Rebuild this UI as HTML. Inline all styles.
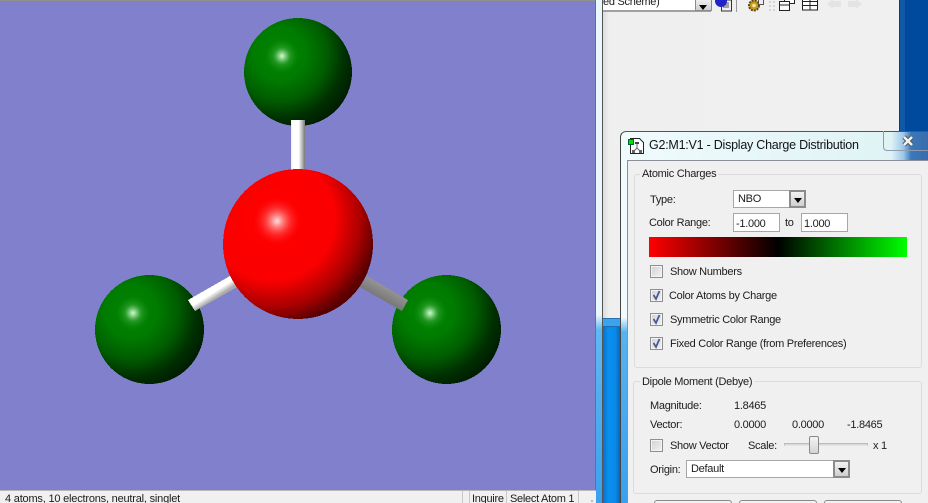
<!DOCTYPE html>
<html><head><meta charset="utf-8"><style>
html,body{margin:0;padding:0;width:928px;height:503px;overflow:hidden}
body{position:relative;background:#f0f0f0;font-family:"Liberation Sans",sans-serif}
#w{left:0;top:0;width:928px;height:503px;overflow:hidden}
div,span.t{position:absolute;box-sizing:border-box}
.t{white-space:nowrap;font-size:11px;letter-spacing:-.28px;line-height:16px;color:#1c1c1c}
.inp{background:#fff;border:1px solid #a6a6a6}
.group{border:1px solid #dcdcdc;border-radius:3px;background:#f0f0f0}
.lg{background:#f0f0f0;padding:0 2px;line-height:14px;margin-top:1px}
.cb{width:13px;height:13px;border:1px solid #8e8f8f;background:linear-gradient(135deg,#d2d2d2,#f2f2f2);box-shadow:inset 0 0 0 1px #f4f4f4}
.cb svg{position:absolute;left:0;top:0}
.dd{background:linear-gradient(#f2f2f2,#cfcfcf);border:2px solid #8c8c8c;width:17px}
.dd:after{content:"";position:absolute;left:3px;top:6px;border:4px solid transparent;border-top:5px solid #000;border-bottom:0}
.btn{border:1px solid #8a8a8a;border-radius:3px;background:#f2f2f2;width:78px;height:12px;top:500px}
</style></head><body><div id="w">

<svg width="596" height="503" style="position:absolute;left:0;top:0" xmlns="http://www.w3.org/2000/svg">
<defs>
<radialGradient id="g" cx=".33" cy=".33" r=".8">
<stop offset="0" stop-color="#008400"/><stop offset=".3" stop-color="#007c00"/><stop offset=".55" stop-color="#005c00"/><stop offset=".75" stop-color="#003000"/><stop offset=".92" stop-color="#001c00"/>
</radialGradient>
<radialGradient id="r" cx=".33" cy=".33" r=".8">
<stop offset="0" stop-color="#ff0000"/><stop offset=".52" stop-color="#fa0000"/><stop offset=".74" stop-color="#a80000"/><stop offset=".88" stop-color="#5c0000"/><stop offset="1" stop-color="#500000"/>
</radialGradient>
<radialGradient id="hg"><stop offset="0" stop-color="#d0f8d0"/><stop offset=".2" stop-color="#80d080"/><stop offset=".5" stop-color="#30a030" stop-opacity=".7"/><stop offset="1" stop-color="#109010" stop-opacity="0"/></radialGradient>
<radialGradient id="hr"><stop offset="0" stop-color="#ffe0e0"/><stop offset=".2" stop-color="#ff9090"/><stop offset=".55" stop-color="#ff4040" stop-opacity=".7"/><stop offset="1" stop-color="#ff1010" stop-opacity="0"/></radialGradient>
<linearGradient id="b0" x1="0" x2="1" y1="0" y2="0"><stop offset="0" stop-color="#ececec"/><stop offset=".12" stop-color="#fff"/><stop offset=".55" stop-color="#fff"/><stop offset="1" stop-color="#777"/></linearGradient>
<linearGradient id="b1" x1="188" y1="300" x2="195" y2="311" gradientUnits="userSpaceOnUse"><stop offset="0" stop-color="#fff"/><stop offset=".55" stop-color="#fff"/><stop offset="1" stop-color="#aaa"/></linearGradient>
<linearGradient id="b2" x1="408" y1="300" x2="402" y2="311" gradientUnits="userSpaceOnUse"><stop offset="0" stop-color="#929292"/><stop offset="1" stop-color="#777"/></linearGradient>
</defs>
<rect width="596" height="503" fill="#8080cc"/>
<rect width="596" height="1" fill="#909090"/>
<rect x="595" width="1" height="490" fill="#707070"/>
<g shape-rendering="crispEdges">
<circle cx="298" cy="72" r="54" fill="url(#g)"/>
<circle cx="149.500" cy="329.500" r="54.500" fill="url(#g)"/>
<circle cx="446.500" cy="329.500" r="54.500" fill="url(#g)"/>
</g>
<circle cx="282" cy="56" r="17" fill="url(#hg)"/>
<circle cx="133" cy="313" r="17" fill="url(#hg)"/>
<circle cx="430" cy="313" r="17" fill="url(#hg)"/>
<g shape-rendering="crispEdges">
<rect x="291" y="120" width="14" height="52" fill="url(#b0)"/>
<polygon points="188,300 195,311 237,287 230,276" fill="url(#b1)"/>
<polygon points="367,276 360,287 402,311 408,300" fill="url(#b2)"/>
<circle cx="298" cy="244" r="75" fill="url(#r)"/>
</g>
<circle cx="277" cy="221" r="24" fill="url(#hr)"/>
</svg>

<!-- status bar -->
<div style="left:0;top:490px;width:596px;height:13px;background:#f0f0f0;border-top:1px solid #b8b8b8"></div>
<span class="t" style="left:5px;top:491px;letter-spacing:-.2px">4 atoms, 10 electrons, neutral, singlet</span>
<div style="left:462px;top:491px;width:1px;height:12px;background:#c8c8c8"></div>
<div style="left:469px;top:491px;width:1px;height:12px;background:#c8c8c8"></div>
<div style="left:506px;top:491px;width:1px;height:12px;background:#c8c8c8"></div>
<div style="left:578px;top:491px;width:1px;height:12px;background:#c8c8c8"></div>
<span class="t" style="left:472px;top:491px">Inquire</span>
<span class="t" style="left:510px;top:491px">Select Atom 1</span>
<div style="left:591px;top:500px;width:2px;height:2px;background:#bbb"></div>

<!-- blue desktop + frame strips -->
<div style="left:596px;top:0;width:332px;height:503px;background:#0a84e4"></div>
<div style="left:603px;top:318px;width:18px;height:185px;background:linear-gradient(90deg,#0870c8,#0a90f0 30%,#0a88e8 70%,#0560b0)"></div>
<div style="left:905px;top:0;width:23px;height:135px;background:#004a9e"></div>
<div style="left:899px;top:0;width:6px;height:135px;background:#1258a8;border-left:1px solid #123a70"></div>
<div style="left:596px;top:0;width:7px;height:503px;background:linear-gradient(#eaf7fc 0,#eaf7fc 315px,#60b8f0 330px,#3aa0ee 503px);border-right:1px solid #555"></div>
<div style="left:603px;top:0;width:296px;height:318px;background:linear-gradient(90deg,#dcdcdc,#efefef 6px,#f0f0f0)"></div>
<div style="left:603px;top:318px;width:18px;height:9px;background:#3aa4ee;border-top:1px solid #2a70b0;border-bottom:1px solid #1f6cb0"></div>

<!-- toolbar -->
<div style="left:603px;top:0;width:108px;height:12px;background:#fff;border-bottom:2px solid #a0a0a0;border-right:2px solid #a0a0a0"></div>
<span class="t" style="left:603px;top:-6px">ed Scheme)</span>
<div class="dd" style="left:695px;top:-2px;height:13px;border-width:1px"></div>
<svg width="200" height="16" style="position:absolute;left:712px;top:0" xmlns="http://www.w3.org/2000/svg">
<rect x="9.500" y="0" width="10" height="11" fill="#eee" stroke="#333"/>
<path d="M11 3h6M11 5h6M11 7h6" stroke="#555"/>
<circle cx="9" cy="1" r="6" fill="#2222cc"/>
<rect x="24" y="0" width="1" height="12" fill="#999"/>
<circle cx="42" cy="5.500" r="5" fill="#c89a18" stroke="#5c4a10" stroke-dasharray="2 1" stroke-width="2"/>
<circle cx="42" cy="5.500" r="1.800" fill="#f6e6a0"/>
<rect x="46.500" y="-.5" width="5" height="5" fill="#eee" stroke="#555"/>
<path d="M58 1v2M62 1v2M58 5v2M62 5v2M58 9v2M62 9v2" stroke="#ccc" stroke-width="1.500"/>
<rect x="72.500" y="-2.500" width="10" height="6" fill="#fff" stroke="#222"/>
<rect x="67.500" y="1.500" width="10" height="9" fill="#fff" stroke="#222"/>
<rect x="67.500" y="4.500" width="10" height="1" fill="#222"/>
<rect x="90.500" y="-.5" width="15" height="10.500" fill="#fff" stroke="#222"/>
<path d="M90 1.500h16M90 5.500h16M98 0v10" stroke="#222"/>
<path d="M115 4l6-5h0v2h8v6h-8v2z" fill="#e4e4e4"/>
<path d="M150 4l-6-5v2h-8v6h8v2z" fill="#e4e4e4"/>
</svg>

<!-- dialog frame -->
<div style="left:620px;top:131px;width:308px;height:372px;border-left:1px solid #444;border-top:1px solid #555;border-top-left-radius:6px;background:linear-gradient(90deg,#f0fbfd,#dff3f5 88%,#9cc8e8 92%,#3c78b8 94.500%,#3a6cac);overflow:hidden">
<div style="left:0;top:186px;width:7px;height:186px;background:linear-gradient(#eaf7fc,#58b2f0 14px,#3aa0ee)"></div>
</div>
<div style="left:883px;top:131px;width:45px;height:20px;border:1px solid #8c9cb0;border-top:0;border-right:0;border-bottom-left-radius:4px"></div>
<svg width="20" height="16" style="position:absolute;left:898px;top:133px" xmlns="http://www.w3.org/2000/svg">
<path d="M6 4l8 8M14 4l-8 8" stroke="#555" stroke-width="4.500"/>
<path d="M6 4l8 8M14 4l-8 8" stroke="#f2f2f2" stroke-width="2.500"/>
</svg>
<svg width="17" height="18" style="position:absolute;left:628px;top:138px" xmlns="http://www.w3.org/2000/svg">
<path d="M2.500 .5h9l4 4v11h-13z" fill="#fff" stroke="#222"/>
<path d="M9 5v5M9 10l-3 3M9 10l3 3" stroke="#666"/>
<rect x="7" y="4" width="4" height="2" fill="#444"/><rect x="4" y="12" width="3" height="3" fill="#666"/><rect x="11" y="12" width="3" height="3" fill="#666"/>
<rect x=".5" y="1.500" width="5" height="5" fill="#00e000" stroke="#063"/>
</svg>
<span class="t" style="left:649px;top:138px;font-size:12.500px;letter-spacing:-.24px;line-height:15px;color:#101418">G2:M1:V1 - Display Charge Distribution</span>

<!-- client -->
<div style="left:627px;top:160px;width:301px;height:343px;background:#f0f0f0;border-left:1px solid #8a9096;border-top:1px solid #8a9096"></div>

<!-- group 1 -->
<div class="group" style="left:634px;top:174px;width:288px;height:194px"></div>
<span class="t lg" style="left:640px;top:166px">Atomic Charges</span>
<span class="t" style="left:650px;top:192px">Type:</span>
<div class="inp" style="left:733px;top:190px;width:72px;height:18px;border-width:1px"></div>
<span class="t" style="left:738px;top:191px">NBO</span>
<div class="dd" style="left:789px;top:190px;height:18px"></div>
<span class="t" style="left:649px;top:215px">Color Range:</span>
<div class="inp" style="left:733px;top:213px;width:47px;height:19px"></div>
<span class="t" style="left:736px;top:216px">-1.000</span>
<span class="t" style="left:785px;top:215px">to</span>
<div class="inp" style="left:801px;top:213px;width:47px;height:19px"></div>
<span class="t" style="left:804px;top:216px">1.000</span>
<div style="left:649px;top:237px;width:258px;height:20px;background:linear-gradient(90deg,#ff0000,#000 50%,#00ff00)"></div>

<div class="cb" style="left:650px;top:265px"></div>
<span class="t" style="left:670px;top:264px">Show Numbers</span>
<div class="cb" style="left:650px;top:289px"><svg width="11" height="11"><path d="M2.500 5l2.500 4 3.500-8" fill="none" stroke="#4a5a9a" stroke-width="1.800"/></svg></div>
<span class="t" style="left:669px;top:288px">Color Atoms by Charge</span>
<div class="cb" style="left:650px;top:313px"><svg width="11" height="11"><path d="M2.500 5l2.500 4 3.500-8" fill="none" stroke="#4a5a9a" stroke-width="1.800"/></svg></div>
<span class="t" style="left:670px;top:312px">Symmetric Color Range</span>
<div class="cb" style="left:650px;top:337px"><svg width="11" height="11"><path d="M2.500 5l2.500 4 3.500-8" fill="none" stroke="#4a5a9a" stroke-width="1.800"/></svg></div>
<span class="t" style="left:670px;top:336px">Fixed Color Range (from Preferences)</span>

<!-- group 2 -->
<div class="group" style="left:633px;top:381px;width:289px;height:113px"></div>
<span class="t lg" style="left:640px;top:374px">Dipole Moment (Debye)</span>
<span class="t" style="left:650px;top:398px">Magnitude:</span>
<span class="t" style="left:734px;top:398px">1.8465</span>
<span class="t" style="left:650px;top:417px">Vector:</span>
<span class="t" style="left:734px;top:417px">0.0000</span>
<span class="t" style="left:792px;top:417px">0.0000</span>
<span class="t" style="left:847px;top:417px">-1.8465</span>
<div class="cb" style="left:650px;top:439px"></div>
<span class="t" style="left:670px;top:438px">Show Vector</span>
<span class="t" style="left:748px;top:438px">Scale:</span>
<div style="left:784px;top:443px;width:84px;height:3px;background:#d8d8d8;border:1px solid #bcbcbc;border-bottom-color:#e6e6e6"></div>
<div style="left:809px;top:436px;width:10px;height:18px;border:1px solid #888;border-radius:2px;background:linear-gradient(#f4f4f4,#d4d4d4)"></div>
<span class="t" style="left:873px;top:438px">x 1</span>
<span class="t" style="left:650px;top:462px">Origin:</span>
<div class="inp" style="left:686px;top:460px;width:164px;height:18px"></div>
<span class="t" style="left:691px;top:461px">Default</span>
<div class="dd" style="left:833px;top:460px;height:18px"></div>

<div class="btn" style="left:654px"></div>
<div class="btn" style="left:739px"></div>
<div class="btn" style="left:824px"></div>
</div></body></html>
